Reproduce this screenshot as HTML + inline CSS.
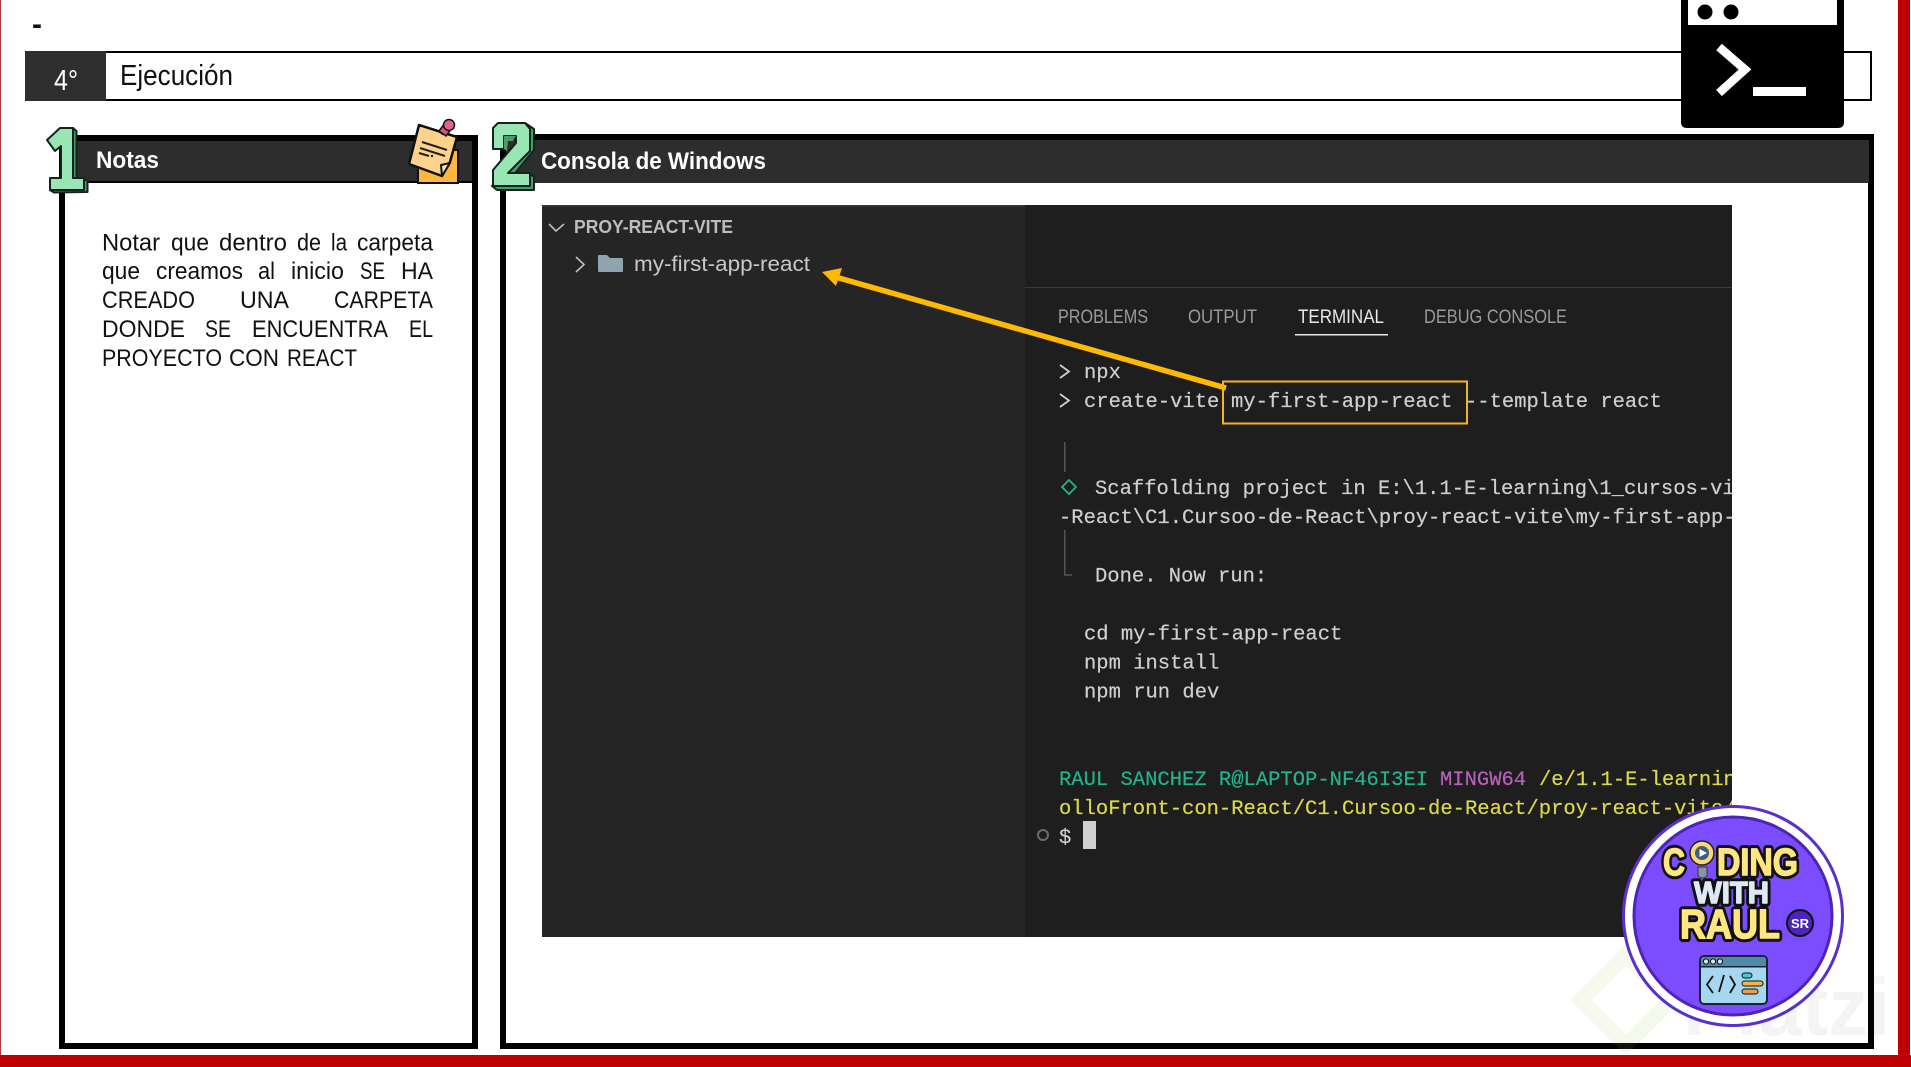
<!DOCTYPE html>
<html lang="es">
<head>
<meta charset="utf-8">
<title>Ejecución</title>
<style>
html,body{margin:0;padding:0;background:#fff;width:1911px;height:1067px;overflow:hidden}
svg{display:block}
text{font-family:"Liberation Sans",sans-serif;white-space:pre}
.p{font-size:24px;fill:#111}
.m{font-family:"Liberation Mono",monospace;font-size:20.5px;fill:#cfcfcf;stroke:#cfcfcf;stroke-width:.2px}
.g{fill:#23b48a;stroke:#23b48a}.v{fill:#b660b8;stroke:#b660b8}.y{fill:#d9d94a;stroke:#d9d94a}
.tab{font-size:19px;fill:#9a9a9a}
.lb{font-weight:700;fill:#111;stroke:#111;stroke-width:7.5px;stroke-linejoin:round}
.lf{font-weight:700;stroke-width:1.4px;stroke-linejoin:round}
</style>
</head>
<body>
<svg width="1911" height="1067" viewBox="0 0 1911 1067" xmlns="http://www.w3.org/2000/svg">
<defs><clipPath id="tc"><rect x="542" y="205" width="1190" height="732"/></clipPath></defs>
<rect width="1911" height="1067" fill="#fff"/>
<!-- red frame -->
<rect x="0" y="0" width="1" height="1067" fill="#a83a3a"/>
<rect x="1898" y="0" width="12" height="1067" fill="#c00000"/>
<rect x="0" y="1055" width="1911" height="12" fill="#c00000"/>
<text x="32" y="34" font-size="30" font-weight="700" fill="#111">-</text>

<!-- title bar -->
<rect x="26" y="52" width="1845" height="48" fill="#fff" stroke="#000" stroke-width="2"/>
<rect x="25" y="51" width="81" height="50" fill="#2e2e2e"/>
<text x="54" y="90" font-size="29" fill="#fff" textLength="24" lengthAdjust="spacingAndGlyphs">4°</text>
<text x="120" y="85" font-size="29" fill="#111" textLength="113" lengthAdjust="spacingAndGlyphs">Ejecución</text>

<!-- panel 1 -->
<rect x="62" y="138" width="413" height="908" fill="#fff" stroke="#000" stroke-width="6"/>
<rect x="65" y="141" width="407" height="41" fill="#2d2d2d"/>
<rect x="65" y="181" width="407" height="2" fill="#000"/>
<text x="96" y="168" font-size="24" font-weight="700" fill="#fff" textLength="63" lengthAdjust="spacingAndGlyphs">Notas</text>

<text class="p" x="102" y="250.5" textLength="58" lengthAdjust="spacingAndGlyphs">Notar</text>
<text class="p" x="171" y="250.5" textLength="38" lengthAdjust="spacingAndGlyphs">que</text>
<text class="p" x="219" y="250.5" textLength="68" lengthAdjust="spacingAndGlyphs">dentro</text>
<text class="p" x="297" y="250.5" textLength="24" lengthAdjust="spacingAndGlyphs">de</text>
<text class="p" x="331" y="250.5" textLength="16" lengthAdjust="spacingAndGlyphs">la</text>
<text class="p" x="357" y="250.5" textLength="76" lengthAdjust="spacingAndGlyphs">carpeta</text>

<text class="p" x="102" y="279" textLength="38" lengthAdjust="spacingAndGlyphs">que</text>
<text class="p" x="156" y="279" textLength="87" lengthAdjust="spacingAndGlyphs">creamos</text>
<text class="p" x="258" y="279" textLength="17" lengthAdjust="spacingAndGlyphs">al</text>
<text class="p" x="291" y="279" textLength="53" lengthAdjust="spacingAndGlyphs">inicio</text>
<text class="p" x="360" y="279" textLength="25" lengthAdjust="spacingAndGlyphs">SE</text>
<text class="p" x="401" y="279" textLength="32" lengthAdjust="spacingAndGlyphs">HA</text>

<text class="p" x="102" y="308" textLength="93" lengthAdjust="spacingAndGlyphs">CREADO</text>
<text class="p" x="240" y="308" textLength="49" lengthAdjust="spacingAndGlyphs">UNA</text>
<text class="p" x="334" y="308" textLength="99" lengthAdjust="spacingAndGlyphs">CARPETA</text>

<text class="p" x="102" y="337" textLength="83" lengthAdjust="spacingAndGlyphs">DONDE</text>
<text class="p" x="205" y="337" textLength="26" lengthAdjust="spacingAndGlyphs">SE</text>
<text class="p" x="252" y="337" textLength="136" lengthAdjust="spacingAndGlyphs">ENCUENTRA</text>
<text class="p" x="409" y="337" textLength="24" lengthAdjust="spacingAndGlyphs">EL</text>

<text class="p" x="102" y="366" textLength="120" lengthAdjust="spacingAndGlyphs">PROYECTO</text>
<text class="p" x="229" y="366" textLength="50" lengthAdjust="spacingAndGlyphs">CON</text>
<text class="p" x="287" y="366" textLength="70" lengthAdjust="spacingAndGlyphs">REACT</text>

<!-- sticky note -->
<rect x="418" y="150" width="40" height="33" fill="#fdb73d" stroke="#111" stroke-width="2"/>
<path d="M419 125 L457 137 L450 162 L442 176 L409 164 Z" fill="#fdd28a" stroke="#111" stroke-width="2.5" stroke-linejoin="round"/>
<path d="M450 163 L441 165 L442 176 Z" fill="#f3e3bd" stroke="#111" stroke-width="2" stroke-linejoin="round"/>
<path d="M422 142 L447 150 M420 148 L445 156 M419 153 L429 156" stroke="#222" stroke-width="2.2" fill="none"/>
<circle cx="432" cy="156" r="1.2" fill="#222"/>
<path d="M441 134 L447 125" stroke="#111" stroke-width="5"/>
<path d="M439 131 L445 123 L452 128 L446 136 Z" fill="#d9587a" stroke="#111" stroke-width="1.5"/>
<circle cx="449" cy="125" r="5.5" fill="#e2638a" stroke="#111" stroke-width="1.5"/>

<!-- panel 2 -->
<rect x="503" y="137" width="1368" height="909" fill="#fff" stroke="#000" stroke-width="6"/>
<rect x="506" y="140" width="1363" height="43" fill="#2d2d2d"/>
<text x="541" y="169" font-size="24" font-weight="700" fill="#fff" textLength="225" lengthAdjust="spacingAndGlyphs">Consola de Windows</text>

<!-- numeral 1 -->
<path d="M73 128 L76.5 131 L76.5 178 L84 178 L87.5 181.5 L87.5 192 L54 192.5 L50 190 L73 178 Z" fill="#4c9a6c" stroke="#14231b" stroke-width="2" stroke-linejoin="round"/>
<path d="M60 128 L73 128 L73 178 L84 178 L84 190 L50 190 L50 178 L61 178 L61 146 L55 151 L47 140 Z" fill="#98e6b4" stroke="#14231b" stroke-width="2" stroke-linejoin="round"/>

<!-- numeral 2 -->
<path d="M525 123 L534 129 L534 150 L516 172 L534 176 L534 190 L497 190 L492 186 L530 130 Z" fill="#4c9a6c" stroke="#14231b" stroke-width="2" stroke-linejoin="round"/>
<path d="M498 123 L525 123 L530 129 L530 151 L508 173 L530 173 L530 186 L493 186 L493 170 L516 143 L516 136 L504 136 L504 149 L493 149 L493 128 Z" fill="#98e6b4" stroke="#14231b" stroke-width="2" stroke-linejoin="round"/>
<path d="M504 136 L516 136 L513 141 L508 141 L507 151 L504 149 Z" fill="#4c9a6c"/>

<!-- vscode -->
<rect x="542" y="205" width="483" height="732" fill="#252526"/>
<rect x="542" y="205" width="483" height="2" fill="#333"/>
<rect x="1025" y="205" width="707" height="732" fill="#1e1e1e"/>
<rect x="1025" y="287" width="707" height="1" fill="#3a3a3a"/>
<path d="M549 224 L556 231 L564 224" fill="none" stroke="#bbb" stroke-width="1.6"/>
<text x="574" y="233" font-size="18" font-weight="700" fill="#bdbdbd" textLength="159" lengthAdjust="spacingAndGlyphs">PROY-REACT-VITE</text>
<path d="M576 257 L584 264.5 L576 272" fill="none" stroke="#c0c0c0" stroke-width="1.6"/>
<path d="M598 256 q0 -1 1 -1 h8 l3 3 h12 q1 0 1 1 v12 q0 1 -1 1 h-23 q-1 0 -1 -1 Z" fill="#90a4ae"/>
<text x="634" y="271" font-size="21" fill="#c8c8c8" textLength="176" lengthAdjust="spacingAndGlyphs">my-first-app-react</text>

<text class="tab" x="1058" y="323" textLength="90" lengthAdjust="spacingAndGlyphs">PROBLEMS</text>
<text class="tab" x="1188" y="323" textLength="69" lengthAdjust="spacingAndGlyphs">OUTPUT</text>
<text class="tab" x="1298" y="323" textLength="86" lengthAdjust="spacingAndGlyphs" style="fill:#e8e8e8">TERMINAL</text>
<rect x="1295" y="334" width="93" height="1.5" fill="#e8e8e8"/>
<text class="tab" x="1424" y="323" textLength="143" lengthAdjust="spacingAndGlyphs">DEBUG CONSOLE</text>

<g clip-path="url(#tc)">
<path d="M1060 365 L1069 371.5 L1060 378 M1060 394 L1069 400.5 L1060 407" fill="none" stroke="#cfcfcf" stroke-width="1.8"/>
<text class="m" x="1084" y="378">npx</text>
<text class="m" x="1084" y="407">create-vite</text>
<text class="m" x="1231" y="407">my-first-app-react</text>
<text class="m" x="1465" y="407">--template react</text>
<rect x="1064" y="442" width="1.5" height="30" fill="#555"/>
<path d="M1069 480 L1076 487 L1069 494 L1062 487 Z" fill="none" stroke="#23b48a" stroke-width="1.8"/>
<text class="m" x="1095" y="494">Scaffolding project in E:\1.1-E-learning\1_cursos-vi</text>
<text class="m" x="1059" y="523">-React\C1.Cursoo-de-React\proy-react-vite\my-first-app-</text>
<path d="M1064.7 530 V575 H1072" fill="none" stroke="#555" stroke-width="1.5"/>
<text class="m" x="1095" y="581.5">Done. Now run:</text>
<text class="m" x="1084" y="639.5">cd my-first-app-react</text>
<text class="m" x="1084" y="668.5">npm install</text>
<text class="m" x="1084" y="697.5">npm run dev</text>
<text class="m g" x="1059" y="785">RAUL SANCHEZ R@LAPTOP-NF46I3EI</text>
<text class="m v" x="1440" y="785">MINGW64</text>
<text class="m y" x="1539" y="785">/e/1.1-E-learning</text>
<text class="m y" x="1059" y="814">olloFront-con-React/C1.Cursoo-de-React/proy-react-vite/</text>
<circle cx="1043" cy="835" r="5" fill="none" stroke="#6a6a6a" stroke-width="2"/>
<text class="m" x="1059" y="843">$</text>
<rect x="1083" y="821" width="13" height="28" fill="#cfcfcf"/>
</g>

<!-- arrow and highlight -->
<path d="M1226 388 L832 276" stroke="#ffb900" stroke-width="5.5" fill="none"/>
<path d="M822 272 L842 268 L836 286 Z" fill="#ffb900"/>
<rect x="1223" y="381.5" width="244" height="42" fill="none" stroke="#f0b429" stroke-width="2"/>

<!-- terminal icon -->
<path d="M1681 0 H1844 V122 Q1844 128 1838 128 H1687 Q1681 128 1681 122 Z" fill="#000"/>
<rect x="1688" y="0" width="149" height="25" fill="#fff"/>
<circle cx="1705" cy="12" r="7.5" fill="#000"/>
<circle cx="1731" cy="12" r="7.5" fill="#000"/>
<path d="M1719 47 L1745 69.5 L1719 93" fill="none" stroke="#fff" stroke-width="8.5"/>
<rect x="1753" y="87" width="53" height="9" fill="#fff"/>

<!-- watermark -->
<path d="M1626 955 L1671 1000 L1626 1045 L1581 1000 Z" fill="none" stroke="#9cc24a" stroke-opacity=".1" stroke-width="15"/>
<text x="1683" y="1035" font-size="82" font-weight="700" fill="#000" fill-opacity=".045" textLength="207" lengthAdjust="spacingAndGlyphs">Platzi</text>

<!-- logo -->
<circle cx="1733" cy="916" r="109.5" fill="#fff" stroke="#5a2fd0" stroke-width="3"/>
<circle cx="1733" cy="916" r="99" fill="#7c4dff" stroke="#4d24b8" stroke-width="3"/>
<text class="lb" x="1663" y="875" font-size="38" textLength="22" lengthAdjust="spacingAndGlyphs">C</text>
<text class="lb" x="1717" y="875" font-size="38" textLength="81" lengthAdjust="spacingAndGlyphs">DING</text>
<text class="lb" x="1694" y="903" font-size="31" textLength="75" lengthAdjust="spacingAndGlyphs">WITH</text>
<text class="lb" x="1680" y="938" font-size="41" textLength="100" lengthAdjust="spacingAndGlyphs">RAUL</text>
<text class="lf" x="1663" y="875" font-size="38" fill="#ffe680" stroke="#ffe680" textLength="22" lengthAdjust="spacingAndGlyphs">C</text>
<text class="lf" x="1717" y="875" font-size="38" fill="#ffe680" stroke="#ffe680" textLength="81" lengthAdjust="spacingAndGlyphs">DING</text>
<text class="lf" x="1694" y="903" font-size="31" fill="#dfe9f5" stroke="#dfe9f5" textLength="75" lengthAdjust="spacingAndGlyphs">WITH</text>
<text class="lf" x="1680" y="938" font-size="41" fill="#ffe680" stroke="#ffe680" textLength="100" lengthAdjust="spacingAndGlyphs">RAUL</text>
<path d="M1698 867 h9 v9 l-3 2 h-3 l-3 -2 Z" fill="#8a93a3" stroke="#333" stroke-width="1"/>
<circle cx="1702" cy="853" r="12" fill="#fbd77a" stroke="#222" stroke-width="1.5"/>
<circle cx="1702" cy="853" r="7" fill="#3d5f80"/>
<path d="M1699.5 849 L1707 853 L1699.5 857 Z" fill="#fff"/>
<circle cx="1800" cy="923" r="13" fill="#4d24b8" stroke="#111" stroke-width="2"/>
<text x="1791" y="928" font-size="13" font-weight="700" fill="#fff" textLength="18" lengthAdjust="spacingAndGlyphs">SR</text>
<rect x="1700" y="956" width="67" height="48" rx="4" fill="#a5d8f0" stroke="#1b2430" stroke-width="2"/>
<path d="M1701 966 V960 q0 -3 3 -3 h59 q3 0 3 3 V966 Z" fill="#4f8aa8"/>
<rect x="1701" y="966" width="65" height="1.5" fill="#1b2430"/>
<circle cx="1706" cy="961.5" r="2.6" fill="#dbe7ef" stroke="#111"/>
<circle cx="1713" cy="961.5" r="2.6" fill="#dbe7ef" stroke="#111"/>
<circle cx="1720" cy="961.5" r="2.6" fill="#dbe7ef" stroke="#111"/>
<path d="M1713 976 L1707 984.5 L1713 993 M1719 992 L1724 975 M1730 976 L1735 984.5 L1730 993" fill="none" stroke="#111" stroke-width="1.8"/>
<rect x="1742" y="973" width="10" height="5" rx="2.5" fill="#4fc3d0" stroke="#111"/>
<rect x="1742" y="981" width="21" height="5" rx="2.5" fill="#f0b648" stroke="#111"/>
<rect x="1742" y="989" width="16" height="5" rx="2.5" fill="#e8a040" stroke="#111"/>
</svg>
</body>
</html>
